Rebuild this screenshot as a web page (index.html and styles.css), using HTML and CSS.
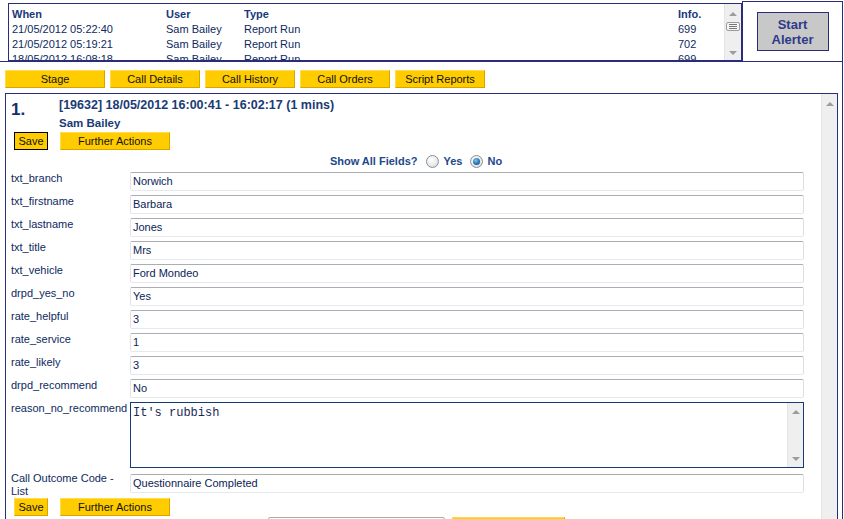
FILE: index.html
```html
<!DOCTYPE html>
<html>
<head>
<meta charset="utf-8">
<title>Call Review</title>
<link rel="stylesheet" href="styles.css">
</head>
<body>
<div class="page">
  <div class="top">
    <div class="log-wrap">
      <div class="log">
        <div class="log-body">
          <div class="log-row head"><span>When</span><span>User</span><span>Type</span><span>Info.</span></div>
          <div class="log-row"><span>21/05/2012 05:22:40</span><span>Sam Bailey</span><span>Report Run</span><span>699</span></div>
          <div class="log-row"><span>21/05/2012 05:19:21</span><span>Sam Bailey</span><span>Report Run</span><span>702</span></div>
          <div class="log-row"><span>18/05/2012 16:08:18</span><span>Sam Bailey</span><span>Report Run</span><span>699</span></div>
        </div>
        <div class="vscroll log-scroll">
          <span class="arr up"></span>
          <span class="grip"><i></i><i></i><i></i></span>
          <span class="arr down"></span>
        </div>
      </div>
    </div>
    <div class="alerter"><button class="btn-alert">Start<br>Alerter</button></div>
  </div>

  <div class="tabs">
    <div class="tab wide">Stage</div>
    <div class="tab">Call Details</div>
    <div class="tab">Call History</div>
    <div class="tab">Call Orders</div>
    <div class="tab">Script Reports</div>
  </div>

  <div class="panel">
    <div class="panel-body">
      <div class="call-head">
        <div class="num">1.</div>
        <div class="info">
          <div class="info-title">[19632] 18/05/2012 16:00:41 - 16:02:17 (1 mins)</div>
          <div class="info-user">Sam Bailey</div>
        </div>
      </div>
      <div class="actions">
        <div class="ybtn save focused">Save</div>
        <div class="ybtn further">Further Actions</div>
      </div>
      <div class="show">
        <span class="show-label">Show All Fields?</span>
        <span class="radio"></span><span class="opt">Yes</span>
        <span class="radio checked"></span><span class="opt">No</span>
      </div>
      <div class="fields">
        <div class="label">txt_branch</div><div class="input">Norwich</div>
        <div class="label">txt_firstname</div><div class="input">Barbara</div>
        <div class="label">txt_lastname</div><div class="input">Jones</div>
        <div class="label">txt_title</div><div class="input">Mrs</div>
        <div class="label">txt_vehicle</div><div class="input">Ford Mondeo</div>
        <div class="label">drpd_yes_no</div><div class="input">Yes</div>
        <div class="label">rate_helpful</div><div class="input">3</div>
        <div class="label">rate_service</div><div class="input">1</div>
        <div class="label">rate_likely</div><div class="input">3</div>
        <div class="label">drpd_recommend</div><div class="input">No</div>
        <div class="label">reason_no_recommend</div>
        <div class="textarea">
          <div class="ta-text">It's rubbish</div>
          <div class="vscroll ta-scroll"><span class="arr up"></span><span class="arr down"></span></div>
        </div>
        <div class="label two">Call Outcome Code - List</div><div class="input low">Questionnaire Completed</div>
      </div>
      <div class="actions">
        <div class="ybtn save">Save</div>
        <div class="ybtn further">Further Actions</div>
      </div>
      <div class="more">
        <div class="sel"></div>
        <div class="ybtn wide"></div>
      </div>
    </div>
    <div class="vscroll panel-scroll"><span class="arr up"></span></div>
  </div>
</div>
</body>
</html>
```

FILE: styles.css
```css
* { box-sizing: border-box; }
html, body {
  margin: 0;
  padding: 0;
  height: 519px;
  overflow: hidden;
  background: #fff;
}
body {
  font-family: "Liberation Sans", Arial, sans-serif;
  font-size: 11px;
  color: #0d2a5e;
}
.page {
  width: 843px;
  height: 518px;
  margin-top: 1px;
  border-right: 1px solid #2b2b7c;
  overflow: hidden;
}

/* top log area */
.top {
  display: flex;
  height: 61px;
  border-bottom: 1px solid #2b2b7c;
}
.log-wrap {
  width: 742px;
  padding: 2px 0 0 8px;
}
.log {
  width: 734px;
  height: 58px;
  border: 1px solid #2b2b7c;
  display: flex;
  overflow: hidden;
}
.log-body {
  flex: 1;
  padding: 3px 0 0 3px;
  overflow: hidden;
}
.log-row {
  display: grid;
  grid-template-columns: 154px 78px 434px 1fr;
  line-height: 15px;
  white-space: nowrap;
  color: #0e2a60;
}
.log-row.head {
  font-weight: bold;
  color: #17397a;
}
.vscroll {
  background: #efefef;
  border-left: 1px solid #e4e4e4;
  display: flex;
  flex-direction: column;
  align-items: center;
}
.log-scroll {
  width: 17px;
  padding-top: 8px;
}
.arr {
  width: 0;
  height: 0;
  border-left: 4px solid transparent;
  border-right: 4px solid transparent;
}
.arr.up { border-bottom: 4px solid #9c9c9c; }
.arr.down { border-top: 4px solid #9c9c9c; }
.log-scroll .grip {
  margin-top: 6px;
  width: 14px;
  height: 9px;
  border: 1px solid #9a9a9a;
  border-radius: 2px;
  background: #f6f6f6;
  display: flex;
  flex-direction: column;
  justify-content: center;
  align-items: center;
  gap: 1px;
}
.log-scroll .grip i {
  display: block;
  width: 8px;
  height: 1px;
  background: #777;
}
.log-scroll .arr.down { margin-top: 20px; }

.alerter {
  flex: 1;
  border-top: 1px solid #2b2b7c;
  border-left: 1px solid #2b2b7c;
  display: flex;
  align-items: center;
  justify-content: center;
}
.btn-alert {
  width: 72px;
  height: 39px;
  padding: 0;
  background: #c8c8c8;
  border: 1px solid #2b2b7c;
  color: #2e3a8c;
  font: bold 13px/15px "Liberation Sans", Arial, sans-serif;
  text-align: center;
}

/* tabs */
.tabs {
  display: flex;
  gap: 5px;
  margin: 8px 0 0 5px;
  height: 18px;
}
.tab {
  width: 90px;
  height: 18px;
  background: #ffcc00;
  border: 1px solid;
  border-color: #ffdb4d #d6a600 #d6a600 #ffdb4d;
  color: #111;
  display: flex;
  align-items: center;
  justify-content: center;
}
.tab.wide { width: 100px; }

/* panel */
.panel {
  margin: 5px 0 0 5px;
  width: 833px;
  height: 440px;
  border: 1px solid #28307a;
  display: flex;
}
.panel-body {
  flex: 1;
  padding: 2px 0 0 5px;
}
.panel-scroll {
  width: 16px;
  padding-top: 8px;
}
.call-head { display: flex; }
.num {
  width: 48px;
  font-weight: bold;
  font-size: 17px;
  line-height: 28px;
  color: #11306b;
}
.info { line-height: 18px; font-weight: bold; color: #1a3b75; }
.info-title { font-size: 12.5px; }
.info-user { font-size: 11.5px; }

.actions {
  display: flex;
  gap: 12px;
  height: 18px;
  padding-left: 3px;
}
.ybtn {
  height: 18px;
  background: #ffcc00;
  border: 1px solid;
  border-color: #ffdb4d #d6a600 #d6a600 #ffdb4d;
  color: #111;
  display: flex;
  align-items: center;
  justify-content: center;
}
.ybtn.save { width: 34px; }
.ybtn.save.focused { border-color: #000; }
.ybtn.further { width: 110px; }

.show {
  margin-top: 2px;
  height: 18px;
  display: flex;
  align-items: center;
  justify-content: center;
  font-weight: bold;
  color: #1b4a8a;
}
.show-label { margin-right: 9px; }
.radio {
  width: 13px;
  height: 13px;
  border-radius: 50%;
  border: 1px solid #8c8f94;
  background: radial-gradient(circle at 40% 35%, #ffffff 0%, #eeeeee 45%, #d4d4d4 100%);
  margin-right: 4px;
  display: inline-flex;
  align-items: center;
  justify-content: center;
}
.radio.checked::after {
  content: "";
  width: 7px;
  height: 7px;
  border-radius: 50%;
  background: radial-gradient(circle at 40% 35%, #7fc4ef 0%, #2a73b4 55%, #0f3f74 100%);
}
.opt { margin-right: 8px; }
.opt:last-child { margin-right: 0; }

.fields {
  display: grid;
  grid-template-columns: 119px 674px;
  row-gap: 4px;
  margin-top: 2px;
}
.label {
  line-height: 13px;
  color: #0d2a5e;
  align-self: start;
}
.input {
  height: 19px;
  line-height: 17px;
  padding: 0 2px;
  border: 1px solid;
  border-color: #abadb3 #dbdfe6 #e3e9ef #e2e3ea;
  border-radius: 2px;
  color: #0b2455;
  white-space: nowrap;
}
.input.low { margin-top: 2px; }
.textarea {
  height: 66px;
  border: 1px solid #123d73;
  display: flex;
}
.ta-text {
  flex: 1;
  padding: 3px 2px;
  font: 12px/14px "Liberation Mono", "Courier New", monospace;
  color: #1b2a55;
}
.ta-scroll {
  width: 16px;
  padding: 7px 0 6px;
  justify-content: space-between;
}

.more {
  display: flex;
  justify-content: center;
  gap: 7px;
  margin-top: 1px;
}
.sel {
  width: 177px;
  height: 20px;
  border: 1px solid #a9a9a9;
  border-radius: 2px;
}
.ybtn.wide { width: 113px; height: 20px; }
```
